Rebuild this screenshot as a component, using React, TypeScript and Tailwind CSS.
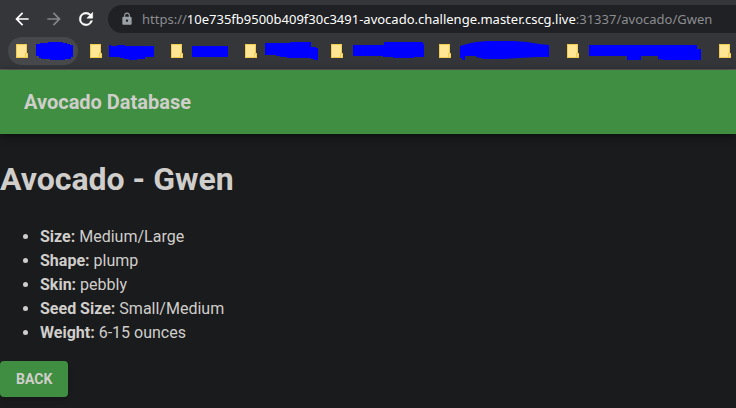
import React from 'react';
import { MdArrowBack, MdArrowForward, MdLock } from 'react-icons/md';

interface Bookmark {
    width: string;
    path: string;
    active?: boolean;
}

// Paths are drawn in a 28px high box that starts at the label's left edge
const bookmarks: Bookmark[] = [
    { width: 'w-[38px]', active: true, path: 'M0 7H4V6H12V5H27V6H31V7H34V8H37V20H35V22H29V23H14V22H5V21H3V19H0Z' },
    { width: 'w-[45px]', path: 'M-1 8H1V9H7V8H15V9H44V20H35V22H27V23H19V22H14V21H10V20H-1Z' },
    { width: 'w-[38px]', path: 'M1 9H37V20H1Z' },
    { width: 'w-[50px]', path: 'M0 6H25V5H46V10H51V11H53V23H49V22H46V21H22V20H15V19H11V18H0Z' },
    { width: 'w-[72px]', path: 'M2 8H33V5H72V7H73V20H63V21H42V20H32V19H2Z' },
    { width: 'w-[92px]', path: 'M1 9L8 7L17 5L29 4H54L68 5L80 7L90 8V20H78L60 21L45 22H25L17 20V19H6V23H3V21H1Z' },
    { width: 'w-[116px]', path: 'M2 8H110V12H114V23H78L71 22V19H54V23H40V19H2Z' },
    { width: 'w-[40px]', path: 'M0 9H40V20H0Z' },
];

const facts = [
    { label: 'Size', value: 'Medium/Large' },
    { label: 'Shape', value: 'plump' },
    { label: 'Skin', value: 'pebbly' },
    { label: 'Seed Size', value: 'Small/Medium' },
    { label: 'Weight', value: '6-15 ounces' },
];

const FolderIcon: React.FC = () => (
    <svg className="w-3 h-[14px] shrink-0" viewBox="0 0 12 14" shapeRendering="crispEdges" aria-hidden="true">
        <rect x="0" y="0" width="11" height="14" fill="#f0cb4d" />
        <rect x="1" y="1" width="9" height="12" fill="#ffe694" />
        <rect x="9" y="9" width="3" height="5" fill="#f0cb4d" />
        <rect x="10" y="10" width="1" height="3" fill="#ffe694" />
    </svg>
);

const ReloadIcon: React.FC = () => (
    <svg className="w-5 h-5" viewBox="0 0 24 24" fill="currentColor" stroke="currentColor" strokeWidth="0.6" aria-hidden="true">
        <path d="M17.65 6.35A7.96 7.96 0 0 0 12 4a8 8 0 1 0 7.73 10h-2.08A6 6 0 1 1 12 6c1.66 0 3.14.69 4.22 1.78L13 11h7V4z" />
    </svg>
);

const BrowserBar: React.FC = () => (
    <div className="bg-[#35363a] border-b border-[#5f5a60] overflow-hidden">
        <div className="flex items-center pt-1 h-[34px]">
            <div className="flex items-center gap-3 pl-3 pr-3 shrink-0">
                <button aria-label="Back" className="text-white">
                    <MdArrowBack className="w-5 h-5" />
                </button>
                <button aria-label="Forward" className="text-[#85868a]" disabled>
                    <MdArrowForward className="w-5 h-5" />
                </button>
                <button aria-label="Reload" className="text-white">
                    <ReloadIcon />
                </button>
            </div>
            <div className="flex flex-1 items-center gap-2 h-7 pl-3 rounded-l-full bg-[#202124] overflow-hidden">
                <MdLock className="w-[14px] h-[14px] shrink-0 text-[#9aa0a6]" />
                <div className="whitespace-nowrap font-['Noto_Sans','Open_Sans',sans-serif] text-[13px] leading-5 text-[#8b8d91]">
                    https://<span className="text-white">10e735fb9500b409f30c3491-avocado.challenge.master.cscg.live</span>:31337/avocado/Gwen
                </div>
            </div>
        </div>
        <nav aria-label="Bookmarks" className="flex gap-1 pl-2 pt-[3px] pb-1">
            {bookmarks.map((b, i) => (
                <a
                    key={i}
                    href="#"
                    aria-label={`Bookmark ${i + 1}`}
                    className={`flex shrink-0 items-center gap-2 h-7 pl-2 pr-1 rounded-full ${b.active ? 'bg-[#47484c]' : ''}`}
                >
                    <FolderIcon />
                    <svg className={`h-7 overflow-visible ${b.width}`} aria-hidden="true">
                        <path d={b.path} fill="#0000ff" />
                    </svg>
                </a>
            ))}
        </nav>
    </div>
);

export default function App() {
    return (
        <div className="min-h-screen bg-[#1a1b1d] font-[Roboto,sans-serif] text-[#d0cecb]">
            <BrowserBar />
            <header className="flex items-center h-16 px-6 bg-[#3f8e41] shadow-[0_2px_8px_rgba(0,0,0,0.5)]">
                <span className="text-xl font-bold">Avocado Database</span>
            </header>
            <main>
                <h1 className="pt-[21px] pb-[22px] text-[32px] leading-[48px] font-bold">Avocado - Gwen</h1>
                <ul className="list-disc pl-10 mb-4 text-base leading-6">
                    {facts.map(f => (
                        <li key={f.label}>
                            <b>{f.label}:</b> {f.value}
                        </li>
                    ))}
                </ul>
                <button className="h-9 px-4 rounded bg-[#3f8e41] text-sm font-bold uppercase shadow-md">
                    Back
                </button>
            </main>
        </div>
    );
}
